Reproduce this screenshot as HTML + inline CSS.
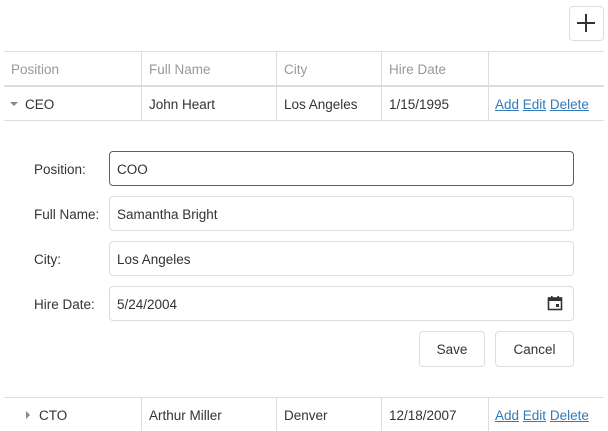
<!DOCTYPE html>
<html><head><style>
*{box-sizing:border-box;margin:0;padding:0}
body{width:608px;height:431px;overflow:hidden;background:#fff;font-family:"Liberation Sans",sans-serif;font-size:13.5px;color:#333;position:relative}
.abs{position:absolute}
.hl{position:absolute;left:4px;width:600px;height:1px;background:#ddd}
.vl{position:absolute;width:1px;background:#ddd}
.t{position:absolute;white-space:nowrap}
.h{color:#999}
a{color:#337ab7;text-decoration:underline}
.inp{position:absolute;left:109px;width:465px;height:35px;border:1px solid #ddd;border-radius:4px;padding:10px 7px;}
.lbl{position:absolute;left:34px}
.btn{position:absolute;top:331px;height:36px;border:1px solid #ddd;border-radius:4px;text-align:center;line-height:36px}
</style></head><body>
<div class="abs" style="left:569px;top:6px;width:35px;height:35px;border:1px solid #ddd;border-radius:4px"></div>
<div class="abs" style="left:577px;top:22px;width:18px;height:2px;background:#333"></div>
<div class="abs" style="left:585px;top:14px;width:2px;height:18px;background:#333"></div>

<div class="hl" style="top:51px"></div>
<div class="hl" style="top:85px;height:2px"></div>
<div class="hl" style="top:120px"></div>
<div class="hl" style="top:397px"></div>
<div class="vl" style="left:141px;top:51px;height:69px"></div>
<div class="vl" style="left:276px;top:51px;height:69px"></div>
<div class="vl" style="left:381px;top:51px;height:69px"></div>
<div class="vl" style="left:488px;top:51px;height:69px"></div>
<div class="vl" style="left:141px;top:397px;height:34px"></div>
<div class="vl" style="left:276px;top:397px;height:34px"></div>
<div class="vl" style="left:381px;top:397px;height:34px"></div>
<div class="vl" style="left:488px;top:397px;height:34px"></div>

<div class="t h" style="left:11px;top:62px">Position</div>
<div class="t h" style="left:149px;top:62px">Full Name</div>
<div class="t h" style="left:284px;top:62px">City</div>
<div class="t h" style="left:389px;top:62px">Hire Date</div>

<div class="abs" style="left:10px;top:102px;width:0;height:0;border-left:4px solid transparent;border-right:4px solid transparent;border-top:4px solid #888"></div>
<div class="t" style="left:25px;top:97px">CEO</div>
<div class="t" style="left:149px;top:97px">John Heart</div>
<div class="t" style="left:284px;top:97px">Los Angeles</div>
<div class="t" style="left:389px;top:97px">1/15/1995</div>
<div class="t" style="left:495px;top:97px"><a>Add</a> <a>Edit</a> <a>Delete</a></div>

<div class="lbl t" style="top:162px">Position:</div>
<div class="lbl t" style="top:207px">Full Name:</div>
<div class="lbl t" style="top:252px">City:</div>
<div class="lbl t" style="top:297px">Hire Date:</div>
<div class="inp" style="top:151px;border-color:#5a6070">COO</div>
<div class="inp" style="top:196px">Samantha Bright</div>
<div class="inp" style="top:241px">Los Angeles</div>
<div class="inp" style="top:286px">5/24/2004</div>
<svg class="abs" style="left:547px;top:295px" width="16" height="16" viewBox="0 0 16 16"><rect x="1.5" y="3" width="13" height="11.5" fill="none" stroke="#333" stroke-width="1.6"/><rect x="1.5" y="3" width="13" height="3" fill="#333"/><rect x="4" y="1" width="1.6" height="3" fill="#333"/><rect x="10.4" y="1" width="1.6" height="3" fill="#333"/><rect x="9" y="9" width="3" height="3" fill="#333"/></svg>
<div class="btn" style="left:419px;width:66px">Save</div>
<div class="btn" style="left:495px;width:79px">Cancel</div>

<div class="abs" style="left:26px;top:411px;width:0;height:0;border-top:4px solid transparent;border-bottom:4px solid transparent;border-left:4px solid #888"></div>
<div class="t" style="left:39px;top:408px">CTO</div>
<div class="t" style="left:149px;top:408px">Arthur Miller</div>
<div class="t" style="left:284px;top:408px">Denver</div>
<div class="t" style="left:389px;top:408px">12/18/2007</div>
<div class="t" style="left:495px;top:408px"><a>Add</a> <a>Edit</a> <a>Delete</a></div>
</body></html>
